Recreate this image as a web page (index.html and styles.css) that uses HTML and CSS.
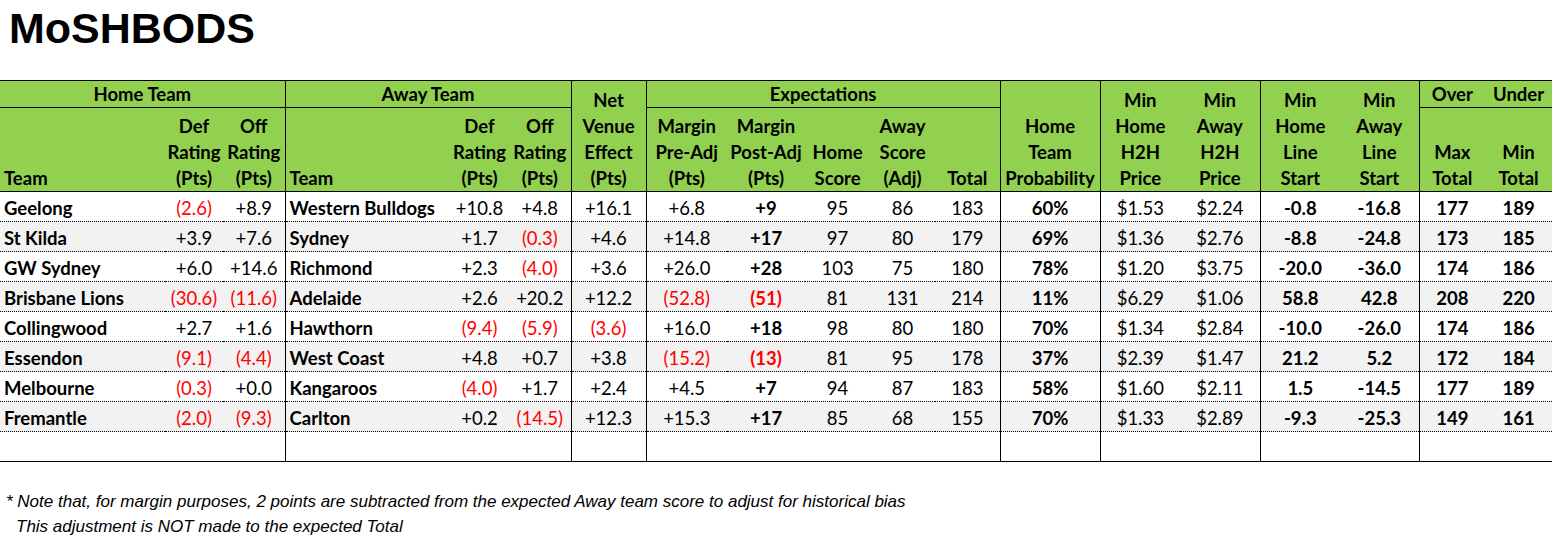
FILE: index.html
```html
<!DOCTYPE html>
<html>
<head>
<meta charset="utf-8">
<link rel="stylesheet" href="styles.css">
</head>
<body>
<h1 class="title">MoSHBODS</h1>
<table class="grid">
  <colgroup>
    <col class="w165"><col class="w58"><col class="w62">
    <col class="w165"><col class="w59"><col class="w62">
    <col class="w75">
    <col class="w81"><col class="w78"><col class="w65"><col class="w65"><col class="w65">
    <col class="w100">
    <col class="w80"><col class="w80">
    <col class="w80"><col class="w79">
    <col class="w66"><col class="w67">
  </colgroup>
  <thead>
    <tr class="h1">
      <th colspan="3" class="r u">Home Team</th>
      <th colspan="3" class="r u">Away Team</th>
      <th rowspan="2" class="r">Net<br>Venue<br>Effect<br>(Pts)</th>
      <th colspan="5" class="r u">Expectations</th>
      <th rowspan="2" class="r">Home<br>Team<br>Probability</th>
      <th rowspan="2">Min<br>Home<br>H2H<br>Price</th>
      <th rowspan="2" class="r">Min<br>Away<br>H2H<br>Price</th>
      <th rowspan="2">Min<br>Home<br>Line<br>Start</th>
      <th rowspan="2" class="r">Min<br>Away<br>Line<br>Start</th>
      <th class="u">Over</th>
      <th class="u">Under</th>
    </tr>
    <tr class="h2">
      <th class="tm">Team</th>
      <th>Def<br>Rating<br>(Pts)</th>
      <th class="r">Off<br>Rating<br>(Pts)</th>
      <th class="tm">Team</th>
      <th>Def<br>Rating<br>(Pts)</th>
      <th class="r">Off<br>Rating<br>(Pts)</th>
      <th>Margin<br>Pre-Adj<br>(Pts)</th>
      <th>Margin<br>Post-Adj<br>(Pts)</th>
      <th>Home<br>Score</th>
      <th>Away<br>Score<br>(Adj)</th>
      <th class="r">Total</th>
      <th>Max<br>Total</th>
      <th>Min<br>Total</th>
    </tr>
  </thead>
  <tbody>
    <tr>
      <td class="tm">Geelong</td><td class="neg">(2.6)</td><td class="r">+8.9</td>
      <td class="tm">Western Bulldogs</td><td>+10.8</td><td class="r">+4.8</td>
      <td class="r">+16.1</td>
      <td>+6.8</td><td class="b">+9</td><td>95</td><td>86</td><td class="r">183</td>
      <td class="r b">60%</td>
      <td>$1.53</td><td class="r">$2.24</td>
      <td class="b">-0.8</td><td class="r b">-16.8</td>
      <td class="b">177</td><td class="b">189</td>
    </tr>
    <tr class="alt">
      <td class="tm">St Kilda</td><td>+3.9</td><td class="r">+7.6</td>
      <td class="tm">Sydney</td><td>+1.7</td><td class="r neg">(0.3)</td>
      <td class="r">+4.6</td>
      <td>+14.8</td><td class="b">+17</td><td>97</td><td>80</td><td class="r">179</td>
      <td class="r b">69%</td>
      <td>$1.36</td><td class="r">$2.76</td>
      <td class="b">-8.8</td><td class="r b">-24.8</td>
      <td class="b">173</td><td class="b">185</td>
    </tr>
    <tr>
      <td class="tm">GW Sydney</td><td>+6.0</td><td class="r">+14.6</td>
      <td class="tm">Richmond</td><td>+2.3</td><td class="r neg">(4.0)</td>
      <td class="r">+3.6</td>
      <td>+26.0</td><td class="b">+28</td><td>103</td><td>75</td><td class="r">180</td>
      <td class="r b">78%</td>
      <td>$1.20</td><td class="r">$3.75</td>
      <td class="b">-20.0</td><td class="r b">-36.0</td>
      <td class="b">174</td><td class="b">186</td>
    </tr>
    <tr class="alt">
      <td class="tm">Brisbane Lions</td><td class="neg">(30.6)</td><td class="r neg">(11.6)</td>
      <td class="tm">Adelaide</td><td>+2.6</td><td class="r">+20.2</td>
      <td class="r">+12.2</td>
      <td class="neg">(52.8)</td><td class="b neg">(51)</td><td>81</td><td>131</td><td class="r">214</td>
      <td class="r b">11%</td>
      <td>$6.29</td><td class="r">$1.06</td>
      <td class="b">58.8</td><td class="r b">42.8</td>
      <td class="b">208</td><td class="b">220</td>
    </tr>
    <tr>
      <td class="tm">Collingwood</td><td>+2.7</td><td class="r">+1.6</td>
      <td class="tm">Hawthorn</td><td class="neg">(9.4)</td><td class="r neg">(5.9)</td>
      <td class="r neg">(3.6)</td>
      <td>+16.0</td><td class="b">+18</td><td>98</td><td>80</td><td class="r">180</td>
      <td class="r b">70%</td>
      <td>$1.34</td><td class="r">$2.84</td>
      <td class="b">-10.0</td><td class="r b">-26.0</td>
      <td class="b">174</td><td class="b">186</td>
    </tr>
    <tr class="alt">
      <td class="tm">Essendon</td><td class="neg">(9.1)</td><td class="r neg">(4.4)</td>
      <td class="tm">West Coast</td><td>+4.8</td><td class="r">+0.7</td>
      <td class="r">+3.8</td>
      <td class="neg">(15.2)</td><td class="b neg">(13)</td><td>81</td><td>95</td><td class="r">178</td>
      <td class="r b">37%</td>
      <td>$2.39</td><td class="r">$1.47</td>
      <td class="b">21.2</td><td class="r b">5.2</td>
      <td class="b">172</td><td class="b">184</td>
    </tr>
    <tr>
      <td class="tm">Melbourne</td><td class="neg">(0.3)</td><td class="r">+0.0</td>
      <td class="tm">Kangaroos</td><td class="neg">(4.0)</td><td class="r">+1.7</td>
      <td class="r">+2.4</td>
      <td>+4.5</td><td class="b">+7</td><td>94</td><td>87</td><td class="r">183</td>
      <td class="r b">58%</td>
      <td>$1.60</td><td class="r">$2.11</td>
      <td class="b">1.5</td><td class="r b">-14.5</td>
      <td class="b">177</td><td class="b">189</td>
    </tr>
    <tr class="alt">
      <td class="tm">Fremantle</td><td class="neg">(2.0)</td><td class="r neg">(9.3)</td>
      <td class="tm">Carlton</td><td>+0.2</td><td class="r neg">(14.5)</td>
      <td class="r">+12.3</td>
      <td>+15.3</td><td class="b">+17</td><td>85</td><td>68</td><td class="r">155</td>
      <td class="r b">70%</td>
      <td>$1.33</td><td class="r">$2.89</td>
      <td class="b">-9.3</td><td class="r b">-25.3</td>
      <td class="b">149</td><td class="b">161</td>
    </tr>
    <tr class="blank">
      <td></td><td></td><td class="r"></td>
      <td></td><td></td><td class="r"></td>
      <td class="r"></td>
      <td></td><td></td><td></td><td></td><td class="r"></td>
      <td class="r"></td>
      <td></td><td class="r"></td>
      <td></td><td class="r"></td>
      <td></td><td></td>
    </tr>
  </tbody>
</table>
<div class="notes">
  <p class="note">* Note that, for margin purposes, 2 points are subtracted from the expected Away team score to adjust for historical bias</p>
  <p class="note indent">This adjustment is NOT made to the expected Total</p>
</div>
</body>
</html>
```

FILE: styles.css
```css
html, body {
  margin: 0;
  padding: 0;
  background: #ffffff;
}

.title {
  margin: 0;
  padding: 5px 0 0 9px;
  height: 80px;
  box-sizing: border-box;
  font-family: "Liberation Sans", Arial, sans-serif;
  font-weight: bold;
  font-size: 43px;
  line-height: 47px;
  color: #000;
}

.grid {
  border-collapse: collapse;
  table-layout: fixed;
  width: 1552px;
  font-family: Lato, "Noto Sans", sans-serif;
  font-size: 18.5px;
  color: #000;
  border-top: 1px solid #000;
  border-bottom: 1px solid #000;
}

.w165 { width: 165px; }
.w58 { width: 58px; }
.w59 { width: 59px; }
.w62 { width: 62px; }
.w75 { width: 75px; }
.w81 { width: 81px; }
.w78 { width: 78px; }
.w65 { width: 65px; }
.w66 { width: 66px; }
.w67 { width: 67px; }
.w100 { width: 100px; }
.w80 { width: 80px; }
.w79 { width: 79px; }

.grid th {
  background: #92d050;
  font-weight: bold;
  line-height: 26px;
  vertical-align: bottom;
  text-align: center;
  padding: 0;
  white-space: nowrap;
  border-bottom: 1px solid #000;
}

.grid .h1 th {
  height: 25px;
  border-bottom: none;
}

.grid .h1 th.u {
  border-bottom: 1px solid #000;
}

.grid .h1 th[rowspan] {
  border-bottom: 1px solid #000;
}

.grid .h2 th {
  height: 83px;
}

.grid th.tm {
  text-align: left;
  padding-left: 4px;
}

.grid td {
  height: 29px;
  padding: 0;
  text-align: center;
  vertical-align: bottom;
  line-height: 26px;
  white-space: nowrap;
  border-bottom: 1px dotted #000;
}

.grid tr.alt td {
  background: #f2f2f2;
}

.grid td.tm {
  text-align: left;
  padding-left: 4px;
  font-weight: bold;
}

.grid .r {
  border-right: 1px solid #000;
}

.grid td.b {
  font-weight: bold;
}

.grid td.neg {
  color: #ff0000;
}

.grid tr.blank td {
  border-bottom: 1px solid #000;
}

.notes {
  padding: 27px 0 0 6px;
}

.note {
  margin: 0;
  font-family: "Liberation Sans", Arial, sans-serif;
  font-style: italic;
  font-size: 17px;
  line-height: 25px;
  color: #000;
}

.note.indent {
  padding-left: 10px;
}
```
